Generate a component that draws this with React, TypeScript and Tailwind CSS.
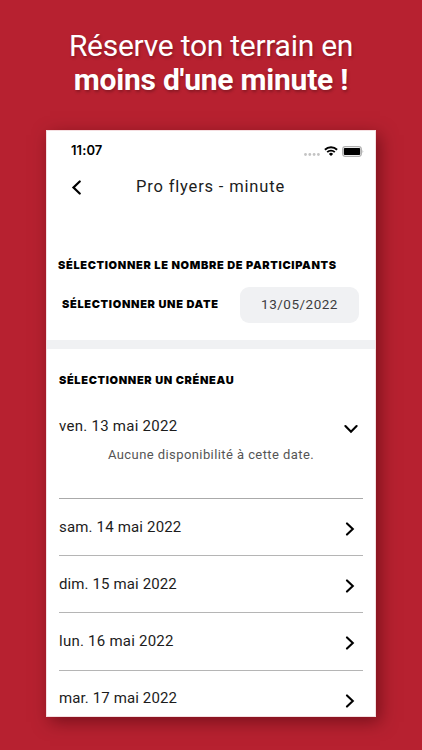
import clsx from 'clsx';

type Slot = { label: string; tracking: string };

const slots: Slot[] = [
  { label: 'sam. 14 mai 2022', tracking: 'tracking-[0.17px]' },
  { label: 'dim. 15 mai 2022', tracking: 'tracking-[0.12px]' },
  { label: 'lun. 16 mai 2022', tracking: 'tracking-[0.24px]' },
  { label: 'mar. 17 mai 2022', tracking: 'tracking-[0.12px]' },
];

function Chevron({ className }: { className?: string }) {
  return (
    <svg viewBox="0 0 14 14" className={clsx('shrink-0', className)} fill="none" stroke="#000" strokeWidth="2.1" strokeLinecap="round">
      <path d="M4 1.4 L9.8 7 L4 12.6" />
    </svg>
  );
}

function StatusBar() {
  return (
    <div className="flex h-10 items-center justify-between pr-[11px] pl-[24px]">
      <span className="font-['Inter'] text-[13px] font-semibold tracking-[0.1px] text-black">11:07</span>
      <div className="flex items-center">
        {/* Signal */}
        <svg viewBox="0 0 16 3" className="mt-[7px] mr-[4px] h-[3px] w-[16px]" fill="#c4c4c4">
          {[1.5, 5.8, 10.1, 14.4].map((cx) => (
            <circle key={cx} cx={cx} cy="1.5" r="1.4" />
          ))}
        </svg>
        {/* Wifi */}
        <svg viewBox="0 0 14 10" className="mr-1 h-[10px] w-[14px]" fill="none" stroke="#000" strokeWidth="1.9">
          <path d="M0.9 3.8 A8.7 8.7 0 0 1 13.1 3.8" />
          <path d="M3.2 6.2 A5.4 5.4 0 0 1 10.8 6.2" />
          <path d="M4.9 7.9 A3 3 0 0 1 9.1 7.9 L7 10 Z" fill="#000" stroke="none" />
        </svg>
        {/* Battery */}
        <svg viewBox="0 0 22 11" className="h-[11px] w-[22px]">
          <rect x="0.6" y="0.6" width="18.8" height="9.8" rx="2.8" fill="#fff" stroke="#b0b0b0" strokeWidth="1.1" />
          <rect x="1.8" y="1.9" width="16.4" height="7.2" rx="1.1" fill="#000" />
          <path d="M20.6 3.8 Q22 5.5 20.6 7.2 Z" fill="#a0a0a0" />
        </svg>
      </div>
    </div>
  );
}

export default function App() {
  return (
    <main className="flex h-[750px] w-[422px] flex-col overflow-hidden bg-[#b72130] font-['Roboto',sans-serif]">
      <h1 className="h-[130px] shrink-0 pt-[29px] text-center text-[30px] leading-[34px] font-normal text-white [text-shadow:1px_2px_3px_rgba(0,0,0,0.25)]">
        <span className="block tracking-[-0.27px]">Réserve ton terrain en</span>
        <strong className="block font-bold tracking-[-0.23px]">moins d'une minute !</strong>
      </h1>

      <section className="ml-[46px] h-[587px] w-[330px] shrink-0 overflow-hidden border border-[#f5dfe1] bg-white shadow-[4px_5px_16px_rgba(60,0,8,0.5)]">
        <StatusBar />

        <header className="flex h-8 items-center pl-[22px]">
          <Chevron className="h-[15px] w-[15px] rotate-180" />
          <h2 className="ml-[52px] text-[16.5px] tracking-[0.83px] whitespace-nowrap text-[#1c1c1c]">Pro flyers - minute</h2>
        </header>

        <div className="pt-[52px]">
          <h3 className="pl-[11px] font-['Inter'] text-[11px] leading-5 font-black tracking-[0.66px] whitespace-nowrap text-black">
            SÉLECTIONNER LE NOMBRE DE PARTICIPANTS
          </h3>
          <div className="mt-[12px] flex h-9 items-center justify-between pr-4 pl-[15px]">
            <h3 className="pb-[2px] font-['Inter'] text-[11px] font-black tracking-[0.67px] whitespace-nowrap text-black">SÉLECTIONNER UNE DATE</h3>
            <button className="h-9 w-[119px] rounded-[9px] bg-[#f0f1f3] pb-[2px] text-[13.5px] tracking-[0.5px] text-[#3c3c40]">13/05/2022</button>
          </div>
        </div>

        <div className="mt-[17px] h-[9px] bg-[#f0f1f3]" />

        <div className="pt-[21px] pr-[12px] pl-[12px]">
          <h3 className="font-['Inter'] text-[11px] leading-5 font-black tracking-[0.65px] whitespace-nowrap text-black">SÉLECTIONNER UN CRÉNEAU</h3>

          <div className="mt-[23px] h-[86px] border-b border-[#aaaaaa]">
            <div className="flex h-[26px] items-center justify-between pr-[5px]">
              <span className="text-[15px] tracking-[0.27px] text-[#1c1c1c]">ven. 13 mai 2022</span>
              <Chevron className="mt-[6px] h-[14px] w-[14px] rotate-90" />
            </div>
            <p className="mt-[6px] text-center text-[13px] leading-5 tracking-[0.42px] text-[#555]">Aucune disponibilité à cette date.</p>
          </div>

          {slots.map((slot) => (
            <div key={slot.label} className="flex h-[57.2px] items-center justify-between border-b border-[#b5b5b5] pr-[6px]">
              <span className={clsx('text-[15px] text-[#1c1c1c]', slot.tracking)}>{slot.label}</span>
              <Chevron className="mt-[4px] h-[14px] w-[14px]" />
            </div>
          ))}
        </div>
      </section>
    </main>
  );
}
